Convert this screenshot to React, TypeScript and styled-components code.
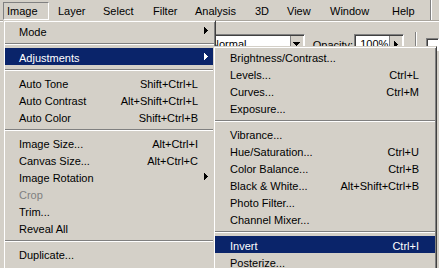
import React from 'react'
import styled, { createGlobalStyle } from 'styled-components'

const GlobalStyle = createGlobalStyle`
  html, body {
    margin: 0;
    padding: 0;
    background: #d4d0c8;
  }
  body {
    font-family: "Liberation Sans", Arial, sans-serif;
    font-size: 11px;
    color: #000;
  }
`

const Screen = styled.div`
  position: relative;
  width: 439px;
  height: 268px;
  overflow: hidden;
  background: #d4d0c8;
`

const MenuBar = styled.div`
  display: flex;
  gap: 5px;
  height: 20px;
  padding-left: 3px;
  border-bottom: 1px solid #a9a59d;
`

const BarItem = styled.div<{ $w: number; $pressed?: boolean }>`
  box-sizing: border-box;
  width: ${p => p.$w}px;
  height: 18px;
  margin-top: 2px;
  padding: 0 3px;
  line-height: 16px;
  white-space: nowrap;
  border: 1px solid;
  border-color: ${p => (p.$pressed ? '#808080 #fff #fff #808080' : 'transparent')};
`

const BarDivider = styled.div`
  width: 1px;
  margin-left: auto;
  margin-right: 7px;
  background: #808080;
  border-right: 1px solid #fff;
`

const OptionsBar = styled.div`
  display: flex;
  align-items: flex-start;
  height: 46px;
  padding: 12px 0 0 205px;
  border-top: 1px solid #fff;
`

const Inset = styled.div<{ $w: number }>`
  box-sizing: border-box;
  display: flex;
  width: ${p => p.$w}px;
  height: 20px;
  background: #fff;
  border: 1px solid;
  border-color: #808080 #fff #fff #808080;
  box-shadow: inset 1px 1px #404040;
`

const FieldText = styled.span`
  flex: 1;
  padding: 3px 0 0 5px;
  white-space: nowrap;
  overflow: hidden;
`

const FieldButton = styled.div`
  width: 12px;
  margin: 1px 1px 1px 0;
  display: flex;
  align-items: center;
  justify-content: center;
  background: #d4d0c8;
  border-left: 1px solid #808080;
`

const Label = styled.span`
  margin: 5px 1px 0 8px;
  white-space: nowrap;
`

const OptDivider = styled.div`
  width: 1px;
  height: 24px;
  margin: -2px 9px 0 11px;
  background: #808080;
  border-right: 1px solid #fff;
`

const Checkbox = styled.div`
  box-sizing: border-box;
  width: 13px;
  height: 13px;
  margin-top: 4px;
  background: #fff;
  border: 1px solid;
  border-color: #808080 #fff #fff #808080;
  box-shadow: inset 1px 1px #404040;
`

const Menu = styled.div<{ $left: number; $top: number; $w: number }>`
  position: absolute;
  left: ${p => p.$left}px;
  top: ${p => p.$top}px;
  width: ${p => p.$w}px;
  box-sizing: border-box;
  padding: 1px;
  background: #d4d0c8;
  border: 1px solid;
  border-color: #d4d0c8 #404040 #404040 #d4d0c8;
  box-shadow: inset 1px 1px #fff, inset -1px -1px #808080;
`

const Row = styled.div<{ $active?: boolean; $disabled?: boolean; $indent: number }>`
  box-sizing: border-box;
  display: grid;
  grid-template-columns: 1fr auto 16px;
  align-items: center;
  height: 17px;
  padding: 3px 0 0 ${p => p.$indent}px;
  line-height: 14px;
  white-space: nowrap;
  background: ${p => (p.$active ? '#0a246a' : 'transparent')};
  color: ${p => (p.$active ? '#fff' : p.$disabled ? '#808080' : '#000')};
`

const Shortcut = styled.span`
  text-align: right;
`

const ArrowSlot = styled.span`
  display: flex;
  align-items: center;
  padding-left: 6px;
`

const Separator = styled.div`
  box-sizing: border-box;
  height: 9px;
  padding-top: 4px;
  &::after {
    content: '';
    display: block;
    height: 1px;
    background: #808080;
    border-bottom: 1px solid #fff;
  }
`

type Item =
  | { sep: true }
  | { sep?: false; label: string; keys?: string; sub?: boolean; active?: boolean; disabled?: boolean }

const imageMenu: Item[] = [
  { label: 'Mode', sub: true },
  { sep: true },
  { label: 'Adjustments', sub: true, active: true },
  { sep: true },
  { label: 'Auto Tone', keys: 'Shift+Ctrl+L' },
  { label: 'Auto Contrast', keys: 'Alt+Shift+Ctrl+L' },
  { label: 'Auto Color', keys: 'Shift+Ctrl+B' },
  { sep: true },
  { label: 'Image Size...', keys: 'Alt+Ctrl+I' },
  { label: 'Canvas Size...', keys: 'Alt+Ctrl+C' },
  { label: 'Image Rotation', sub: true },
  { label: 'Crop', disabled: true },
  { label: 'Trim...' },
  { label: 'Reveal All' },
  { sep: true },
  { label: 'Duplicate...' },
  { label: 'Apply Image...' },
  { label: 'Calculations...' },
]

const adjustMenu: Item[] = [
  { label: 'Brightness/Contrast...' },
  { label: 'Levels...', keys: 'Ctrl+L' },
  { label: 'Curves...', keys: 'Ctrl+M' },
  { label: 'Exposure...' },
  { sep: true },
  { label: 'Vibrance...' },
  { label: 'Hue/Saturation...', keys: 'Ctrl+U' },
  { label: 'Color Balance...', keys: 'Ctrl+B' },
  { label: 'Black & White...', keys: 'Alt+Shift+Ctrl+B' },
  { label: 'Photo Filter...' },
  { label: 'Channel Mixer...' },
  { sep: true },
  { label: 'Invert', keys: 'Ctrl+I', active: true },
  { label: 'Posterize...' },
  { label: 'Threshold...' },
  { label: 'Gradient Map...' },
]

const bar = [
  { label: 'Image', w: 46, pressed: true },
  { label: 'Layer', w: 40 },
  { label: 'Select', w: 45 },
  { label: 'Filter', w: 37 },
  { label: 'Analysis', w: 55 },
  { label: '3D', w: 27 },
  { label: 'View', w: 38 },
  { label: 'Window', w: 57 },
  { label: 'Help', w: 34 },
]

// submenu arrow: drawn in the top rows of an 11px box so it sits at the row's middle
const RightArrow = ({ color = '#000', h = 11 }: { color?: string; h?: number }) => (
  <svg width="4" height={h} viewBox={`0 0 4 ${h}`} shapeRendering="crispEdges">
    <path d="M0 0h1v7H0z M1 1h1v5H1z M2 2h1v3H2z M3 3h1v1H3z" fill={color} />
  </svg>
)

const DownArrow = () => (
  <svg width="7" height="4" viewBox="0 0 7 4" shapeRendering="crispEdges">
    <path d="M0 0h7v1H0z M1 1h5v1H1z M2 2h3v1H2z M3 3h1v1H3z" fill="#000" />
  </svg>
)

const MenuList = ({ items, indent }: { items: Item[]; indent: number }) => (
  <>
    {items.map((it, i) =>
      it.sep ? (
        <Separator key={i} />
      ) : (
        <Row key={i} $active={it.active} $disabled={it.disabled} $indent={indent}>
          <span>{it.label}</span>
          <Shortcut>{it.keys}</Shortcut>
          <ArrowSlot>{it.sub && <RightArrow color={it.active ? '#fff' : '#000'} />}</ArrowSlot>
        </Row>
      )
    )}
  </>
)

const App: React.FC = () => {
  return (
    <Screen>
      <GlobalStyle />
      <MenuBar>
        {bar.map(b => (
          <BarItem key={b.label} $w={b.w} $pressed={b.pressed}>
            {b.label}
          </BarItem>
        ))}
        <BarDivider />
      </MenuBar>
      <OptionsBar>
        <Inset $w={100}>
          <FieldText>Normal</FieldText>
          <FieldButton>
            <DownArrow />
          </FieldButton>
        </Inset>
        <Label>Opacity:</Label>
        <Inset $w={50}>
          <FieldText>100%</FieldText>
          <FieldButton>
            <RightArrow h={7} />
          </FieldButton>
        </Inset>
        <OptDivider />
        <Checkbox />
      </OptionsBar>

      <Menu $left={3} $top={20} $w={213}>
        <MenuList items={imageMenu} indent={14} />
      </Menu>
      <Menu $left={213} $top={46} $w={224}>
        <MenuList items={adjustMenu} indent={15} />
      </Menu>
    </Screen>
  )
}

export default App
